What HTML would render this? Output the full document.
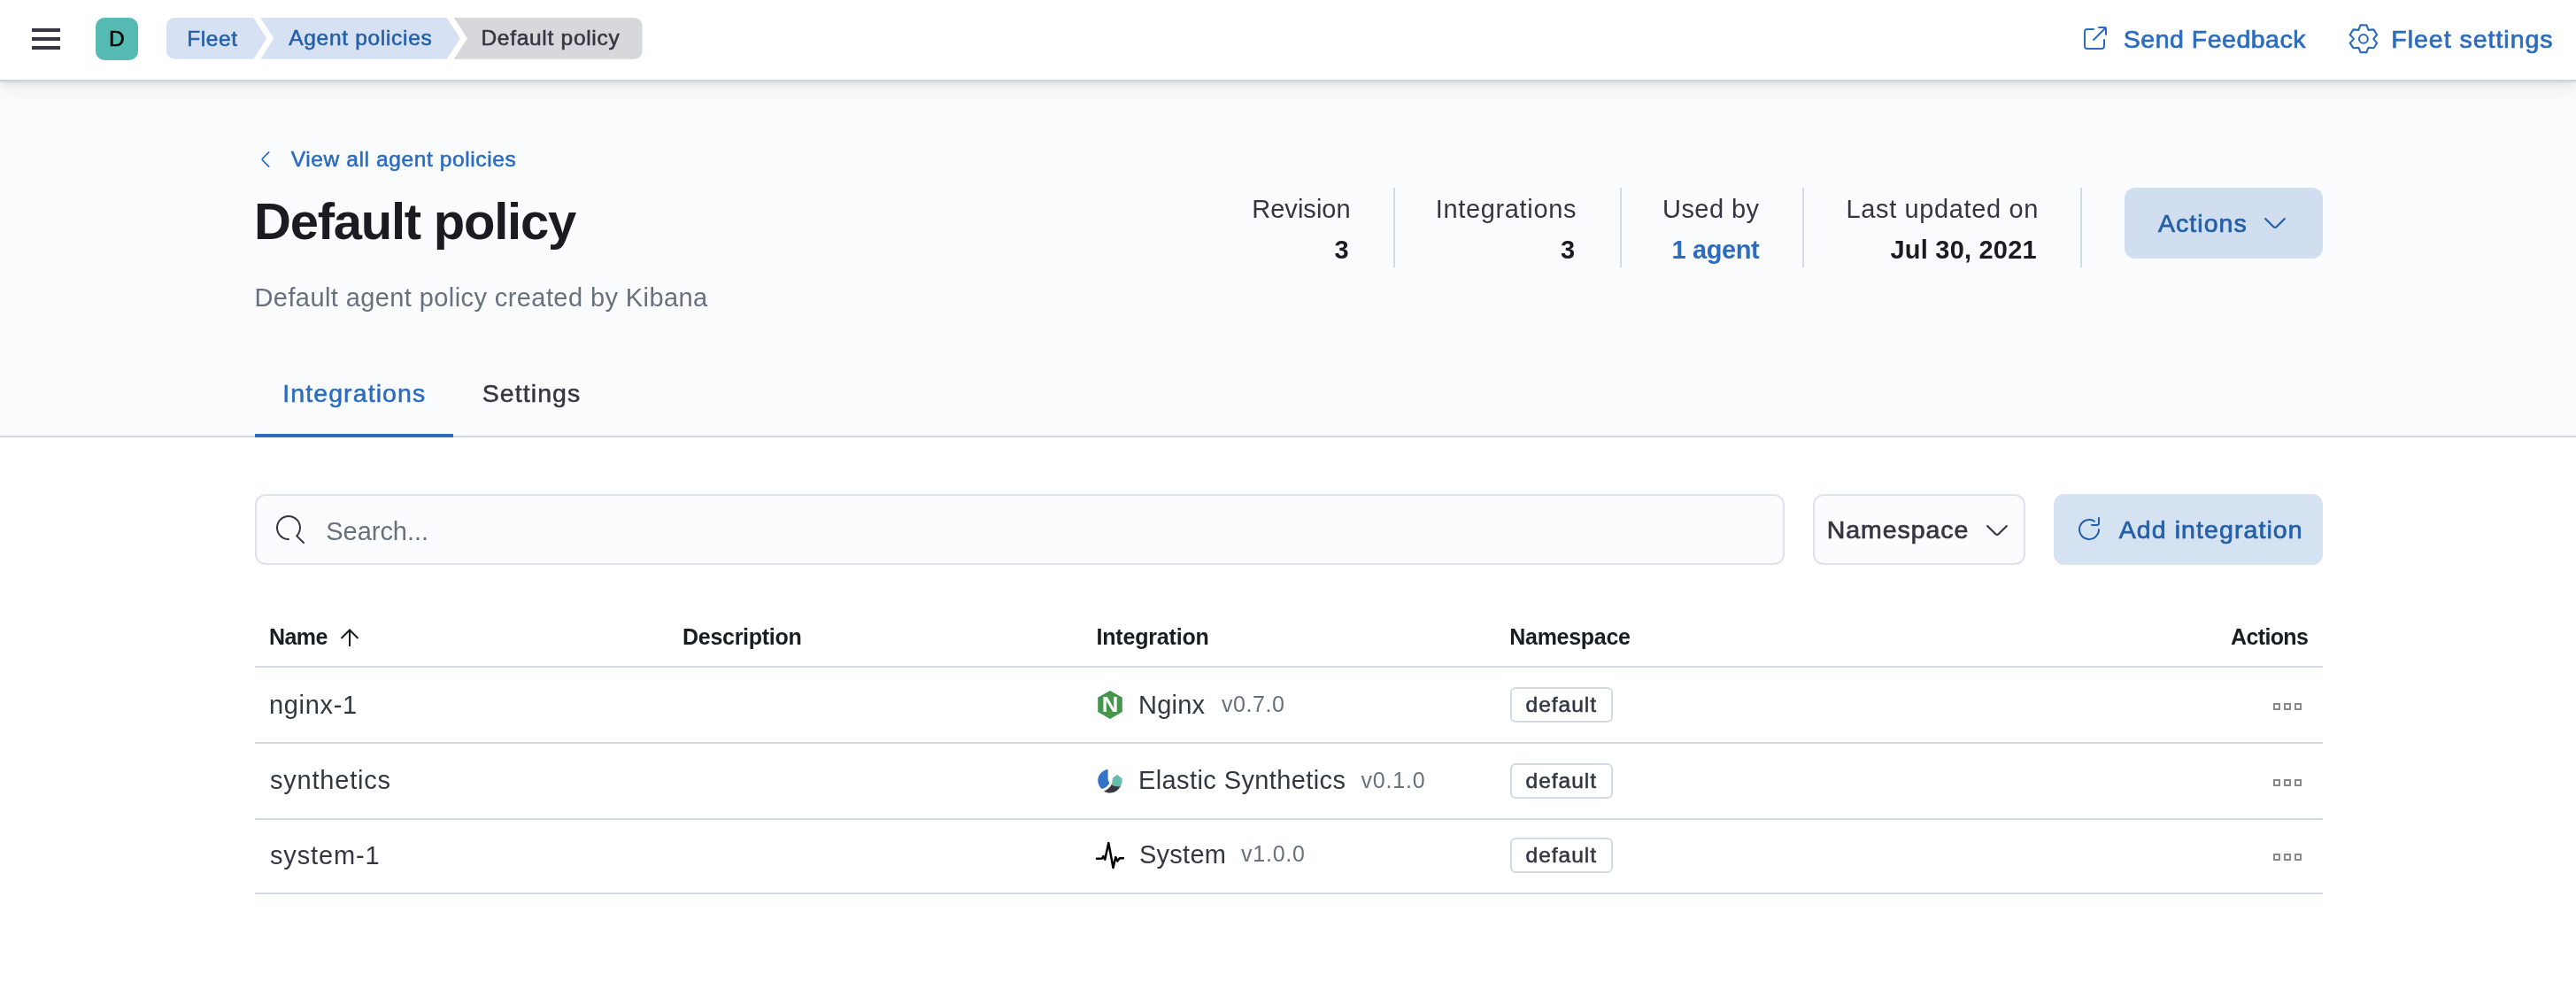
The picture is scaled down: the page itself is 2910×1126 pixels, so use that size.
<!DOCTYPE html>
<html lang="en"><head><meta charset="utf-8"><title>Default policy - Fleet</title>
<style>
*{box-sizing:border-box;margin:0;padding:0}
html,body{width:2910px;height:1126px;overflow:hidden;background:#fff}
body{font-family:"Liberation Sans",Arial,sans-serif;position:relative;-webkit-font-smoothing:antialiased;will-change:transform}
.t{position:absolute;white-space:nowrap;display:block}
.ic{position:absolute;display:block;overflow:visible}
#pagehead{position:absolute;left:0;top:0;width:2910px;height:494px;background:#fafbfd;border-bottom:2px solid #d3dae6}
#topbar{position:absolute;left:0;top:0;width:2910px;height:92px;background:#fff;border-bottom:2px solid #ccd3e1;box-shadow:0 1.4px 2.8px rgba(0,0,0,.09),0 3.8px 8px rgba(0,0,0,.06),0 9px 20px rgba(0,0,0,.05)}
.bar{position:absolute;left:36px;width:32px;height:4px;background:#343741}
#avatar{position:absolute;left:108px;top:20px;width:48px;height:48px;border-radius:10px;background:#55bab2}
.vline{position:absolute;top:212px;width:2px;height:90px;background:#d3dae6}
.btn{position:absolute;border-radius:12px;background:rgba(43,108,192,.2)}
.field{position:absolute;top:558px;height:80px;border:2px solid #dfe3ef;border-radius:12px;background:#fbfcfd}
#tabline{position:absolute;left:288px;top:490px;width:224px;height:4px;background:#2b6cc0}
.hr{position:absolute;left:288px;width:2336px;height:2px;background:#d3dae6}
.badge{position:absolute;left:1706px;width:116px;height:40px;border:2px solid #d3dae6;border-radius:6px;background:#fff}
.sq{position:absolute;width:8px;height:8px;border:2px solid #8a8a8a}
</style></head><body>
<div id="pagehead"></div>
<header id="topbar">
 <button aria-label="Toggle primary navigation" style="border:0;background:none"><i class="bar" style="top:32px"></i><i class="bar" style="top:42px"></i><i class="bar" style="top:52px"></i></button>
 <div id="avatar"></div><span class="t" style="left:122.90px;top:31.65px;font-size:24.5px;line-height:24.5px;font-weight:400;color:#000;letter-spacing:0.000px;-webkit-text-stroke:0.55px #000;">D</span>
 <nav aria-label="breadcrumb">
  <svg class="ic" style="left:188px;top:20px" width="540" height="47" viewBox="0 0 540 47">
   <path d="M9 0 H98.4 L113.3 23.35 L98.4 46.7 H9 A9 9 0 0 1 0 37.7 V9 A9 9 0 0 1 9 0Z" fill="#d6e2f4"/>
   <path d="M106.3 0 H316.7 L331.9 23.35 L316.7 46.7 H106.3 L121.2 23.35Z" fill="#d6e2f4"/>
   <path d="M324.8 0 H528.5 A9 9 0 0 1 537.5 9 V37.7 A9 9 0 0 1 528.5 46.7 H324.8 L339.9 23.35Z" fill="#d7d8db"/>
  </svg>
  <a class="t" style="left:211.20px;top:31.55px;font-size:24.5px;line-height:24.5px;font-weight:400;color:#2460a8;letter-spacing:0.585px;-webkit-text-stroke:0.55px #2460a8;">Fleet</a><a class="t" style="left:326.25px;top:31.45px;font-size:24.5px;line-height:24.5px;font-weight:400;color:#2460a8;letter-spacing:0.689px;-webkit-text-stroke:0.55px #2460a8;">Agent policies</a><span class="t" style="left:543.40px;top:31.35px;font-size:24.5px;line-height:24.5px;font-weight:400;color:#343741;letter-spacing:0.714px;-webkit-text-stroke:0.55px #343741;">Default policy</span>
 </nav>
 <svg class="ic " style="left:2350px;top:28px" width="32" height="32" viewBox="0 0 16 16"><path fill="#2b6cc0" d="M13 8.5a.5.5 0 1 1 1 0V12a2 2 0 0 1-2 2H4a2 2 0 0 1-2-2V4a2 2 0 0 1 2-2h3.5a.5.5 0 0 1 0 1H4a1 1 0 0 0-1 1v8a1 1 0 0 0 1 1h8a1 1 0 0 0 1-1V8.5Zm-5.12.339a.5.5 0 1 1-.706-.707L13.305 2H10.5a.5.5 0 1 1 0-1H14a1 1 0 0 1 1 1v3.5a.5.5 0 1 1-1 0V2.72L7.88 8.839Z"/></svg><a class="t" style="left:2398.80px;top:29.65px;font-size:28.5px;line-height:28.5px;font-weight:400;color:#2b6cc0;letter-spacing:0.501px;-webkit-text-stroke:0.7px #2b6cc0;">Send Feedback</a>
 <svg class="ic" style="left:2640px;top:14px" width="60" height="60" viewBox="0 0 60 60"><path d="M26.5 14.4 L33.4 14.4 L35.5 19.9 L41.5 19.4 L45.1 25.3 L41.2 29.9 L45.1 34.6 L41.5 40.2 L35.5 39.7 L33.4 45.1 L26.5 45.1 L24.4 39.7 L18.4 40.2 L14.7 34.6 L19.0 29.9 L14.7 25.3 L18.4 19.4 L24.4 19.9Z" fill="none" stroke="#2b6cc0" stroke-width="2.1" stroke-linejoin="round"/><circle cx="29.9" cy="29.9" r="4.9" fill="none" stroke="#2b6cc0" stroke-width="2.1"/></svg><a class="t" style="left:2701.30px;top:29.65px;font-size:28.5px;line-height:28.5px;font-weight:400;color:#2b6cc0;letter-spacing:0.981px;-webkit-text-stroke:0.7px #2b6cc0;">Fleet settings</a>
</header>
<main>
 <section>
  <svg class="ic " style="left:288px;top:168px" width="24" height="24" viewBox="0 0 16 16"><path fill="#2b6cc0" transform="rotate(90 8 8)" d="M13.069 5.157L8.384 9.768a.546.546 0 0 1-.768 0L2.93 5.158a.552.552 0 0 0-.771 0 .53.53 0 0 0 0 .759l4.684 4.61c.641.631 1.672.63 2.312 0l4.684-4.61a.53.53 0 0 0 0-.76.552.552 0 0 0-.771 0z"/></svg><a class="t" style="left:328.75px;top:167.65px;font-size:24.5px;line-height:24.5px;font-weight:400;color:#2b6cc0;letter-spacing:0.609px;-webkit-text-stroke:0.55px #2b6cc0;">View all agent policies</a>
  <h1 class="t" style="left:287.00px;top:221.40px;font-size:58px;line-height:58px;font-weight:700;color:#1a1c21;letter-spacing:-1.233px;">Default policy</h1>
  <p class="t" style="left:287.50px;top:322.25px;font-size:29px;line-height:29px;font-weight:400;color:#69707d;letter-spacing:0.408px;">Default agent policy created by Kibana</p>
  <dl>
   <dt class="t" style="left:1414.25px;top:222.00px;font-size:29px;line-height:29px;font-weight:400;color:#343741;letter-spacing:0.024px;">Revision</dt><dd class="t" style="left:1507.50px;top:268.00px;font-size:29px;line-height:29px;font-weight:700;color:#1a1c21;letter-spacing:0.000px;">3</dd><i class="vline" style="left:1574px"></i>
   <dt class="t" style="left:1621.75px;top:222.00px;font-size:29px;line-height:29px;font-weight:400;color:#343741;letter-spacing:0.655px;">Integrations</dt><dd class="t" style="left:1763.00px;top:268.00px;font-size:29px;line-height:29px;font-weight:700;color:#1a1c21;letter-spacing:0.000px;">3</dd><i class="vline" style="left:1830px"></i>
   <dt class="t" style="left:1878.00px;top:222.00px;font-size:29px;line-height:29px;font-weight:400;color:#343741;letter-spacing:0.436px;">Used by</dt><dd class="t" style="left:1888.50px;top:268.00px;font-size:29px;line-height:29px;font-weight:700;color:#2b6cc0;letter-spacing:-0.395px;">1 agent</dd><i class="vline" style="left:2036px"></i>
   <dt class="t" style="left:2085.50px;top:222.00px;font-size:29px;line-height:29px;font-weight:400;color:#343741;letter-spacing:0.633px;">Last updated on</dt><dd class="t" style="left:2135.50px;top:268.00px;font-size:29px;line-height:29px;font-weight:700;color:#1a1c21;letter-spacing:0.208px;">Jul 30, 2021</dd><i class="vline" style="left:2350px"></i>
  </dl>
  <div class="btn" style="left:2400px;top:212px;width:224px;height:80px"></div><span class="t" style="left:2438.00px;top:237.65px;font-size:28.5px;line-height:28.5px;font-weight:400;color:#2460a8;letter-spacing:1.048px;-webkit-text-stroke:0.7px #2460a8;">Actions</span><svg class="ic " style="left:2554px;top:236px" width="32" height="32" viewBox="0 0 16 16"><path fill="#2460a8" d="M13.069 5.157L8.384 9.768a.546.546 0 0 1-.768 0L2.93 5.158a.552.552 0 0 0-.771 0 .53.53 0 0 0 0 .759l4.684 4.61c.641.631 1.672.63 2.312 0l4.684-4.61a.53.53 0 0 0 0-.76.552.552 0 0 0-.771 0z"/></svg>
  <div role="tablist"><a class="t" style="left:319.25px;top:429.65px;font-size:28.5px;line-height:28.5px;font-weight:400;color:#2b6cc0;letter-spacing:1.097px;-webkit-text-stroke:0.5px #2b6cc0;">Integrations</a><a class="t" style="left:544.75px;top:429.65px;font-size:28.5px;line-height:28.5px;font-weight:400;color:#343741;letter-spacing:1.074px;-webkit-text-stroke:0.5px #343741;">Settings</a><i id="tabline"></i></div>
 </section>
 <section>
  <div class="field" style="left:288px;width:1728px"></div><svg class="ic " style="left:312px;top:582px" width="32" height="32" viewBox="0 0 16 16"><path fill="#343741" d="M11.271 11.978l3.872 3.873a.502.502 0 0 0 .708 0 .502.502 0 0 0 0-.708l-3.565-3.564c2.38-2.747 2.267-6.923-.342-9.532-2.73-2.73-7.17-2.73-9.898 0-2.728 2.729-2.728 7.17 0 9.9a6.955 6.955 0 0 0 4.949 2.05.5.5 0 0 0 0-1 5.96 5.96 0 0 1-4.242-1.757 6.01 6.01 0 0 1 0-8.486c2.337-2.34 6.143-2.34 8.484 0a6.01 6.01 0 0 1 0 8.486.5.5 0 0 0 .034.738z"/></svg><span class="t" style="left:368.25px;top:586.00px;font-size:29px;line-height:29px;font-weight:400;color:#69707d;letter-spacing:-0.031px;">Search...</span>
  <div class="field" style="left:2048px;width:240px"></div><span class="t" style="left:2063.75px;top:583.65px;font-size:28.5px;line-height:28.5px;font-weight:400;color:#343741;letter-spacing:0.941px;-webkit-text-stroke:0.7px #343741;">Namespace</span><svg class="ic " style="left:2240px;top:582.5px" width="32" height="32" viewBox="0 0 16 16"><path fill="#343741" d="M13.069 5.157L8.384 9.768a.546.546 0 0 1-.768 0L2.93 5.158a.552.552 0 0 0-.771 0 .53.53 0 0 0 0 .759l4.684 4.61c.641.631 1.672.63 2.312 0l4.684-4.61a.53.53 0 0 0 0-.76.552.552 0 0 0-.771 0z"/></svg>
  <div class="btn" style="left:2320px;top:558px;width:304px;height:80px"></div><svg class="ic " style="left:2344px;top:582px" width="32" height="32" viewBox="0 0 16 16"><path fill="#2460a8" d="M11.228 2.942a.5.5 0 1 1-.538.842A5 5 0 1 0 13 8a.5.5 0 1 1 1 0 6 6 0 1 1-2.772-5.058ZM14 1.5v3A1.5 1.5 0 0 1 12.5 6h-3a.5.5 0 0 1 0-1h3a.5.5 0 0 0 .5-.5v-3a.5.5 0 1 1 1 0Z"/></svg><span class="t" style="left:2393.75px;top:583.65px;font-size:28.5px;line-height:28.5px;font-weight:400;color:#2460a8;letter-spacing:1.081px;-webkit-text-stroke:0.7px #2460a8;">Add integration</span>
  <div role="table">
   <span class="t" style="left:304.00px;top:707.00px;font-size:25px;line-height:25px;font-weight:700;color:#1a1c21;letter-spacing:-0.562px;">Name</span><svg class="ic" style="left:383px;top:708px" width="24" height="24" viewBox="0 0 24 24"><path d="M12 3.5 V22 M2.5 13 L12 3.5 L21.5 13" fill="none" stroke="#1a1c21" stroke-width="2"/></svg>
   <span class="t" style="left:771.00px;top:707.00px;font-size:25px;line-height:25px;font-weight:700;color:#1a1c21;letter-spacing:-0.275px;">Description</span><span class="t" style="left:1238.50px;top:707.00px;font-size:25px;line-height:25px;font-weight:700;color:#1a1c21;letter-spacing:-0.189px;">Integration</span><span class="t" style="left:1705.25px;top:707.00px;font-size:25px;line-height:25px;font-weight:700;color:#1a1c21;letter-spacing:-0.290px;">Namespace</span><span class="t" style="left:2520.00px;top:707.00px;font-size:25px;line-height:25px;font-weight:700;color:#1a1c21;letter-spacing:-0.628px;">Actions</span>
   <i class="hr" style="top:752px"></i>
   <span class="t" style="left:304.00px;top:781.75px;font-size:29px;line-height:29px;font-weight:400;color:#343741;letter-spacing:0.669px;">nginx-1</span><svg class="ic" style="left:1230px;top:770px" width="50" height="50" viewBox="0 0 50 50"><path d="M24 10 L37.8 17.7 L37.8 33.9 L24 41.9 L10.2 33.9 L10.2 17.7Z" fill="#43964a"/><text transform="translate(24 33.6) scale(1.09 1)" text-anchor="middle" font-family="Liberation Sans, sans-serif" font-weight="700" font-size="23.6" fill="#fff">N</text></svg><span class="t" style="left:1286.00px;top:781.50px;font-size:29px;line-height:29px;font-weight:400;color:#343741;letter-spacing:0.214px;">Nginx</span><span class="t" style="left:1380.00px;top:782.75px;font-size:25px;line-height:25px;font-weight:400;color:#69707d;letter-spacing:0.560px;">v0.7.0</span><span class="badge" style="top:776px"></span><span class="t" style="left:1723.50px;top:783.85px;font-size:24.5px;line-height:24.5px;font-weight:400;color:#343741;letter-spacing:1.000px;-webkit-text-stroke:0.55px #343741;">default</span><i class="sq" style="left:2568px;top:794px"></i><i class="sq" style="left:2580px;top:794px"></i><i class="sq" style="left:2592px;top:794px"></i>
   <i class="hr" style="top:838px"></i>
   <span class="t" style="left:305.00px;top:867.25px;font-size:29px;line-height:29px;font-weight:400;color:#343741;letter-spacing:0.784px;">synthetics</span><svg class="ic" style="left:1230px;top:856px" width="50" height="50" viewBox="0 0 50 50"><path d="M21.6 12.8 C14 14.5 9.6 20.5 10.3 26.5 C10.7 30 12.3 33 14.5 35.1 C18.5 34.3 22 31.5 23.3 28.3 C22.3 26.5 21.6 24.8 21.6 22.6Z" fill="#3374c6"/><path d="M32.1 18.8 L37.6 23.3 C37.9 26.5 37.3 29.5 35.9 32.1 C32.2 32.8 28.5 32 25.6 30.1 C26.5 28 26.8 25.6 26.6 23.1Z" fill="#65bdaf"/><path d="M25.6 30.1 C28.5 32 32.2 32.8 35.9 32.1 C33.5 36.6 29 39.6 24.1 39.6 C21.5 39.6 19.1 38.8 17.1 37.4 C20.8 36.2 23.8 33.6 25.6 30.1Z" fill="#353942"/></svg><span class="t" style="left:1286.00px;top:867.25px;font-size:29px;line-height:29px;font-weight:400;color:#343741;letter-spacing:0.397px;">Elastic Synthetics</span><span class="t" style="left:1537.50px;top:868.50px;font-size:25px;line-height:25px;font-weight:400;color:#69707d;letter-spacing:0.810px;">v0.1.0</span><span class="badge" style="top:862px"></span><span class="t" style="left:1723.50px;top:869.65px;font-size:24.5px;line-height:24.5px;font-weight:400;color:#343741;letter-spacing:1.000px;-webkit-text-stroke:0.55px #343741;">default</span><i class="sq" style="left:2568px;top:880px"></i><i class="sq" style="left:2580px;top:880px"></i><i class="sq" style="left:2592px;top:880px"></i>
   <i class="hr" style="top:924px"></i>
   <span class="t" style="left:305.00px;top:951.50px;font-size:29px;line-height:29px;font-weight:400;color:#343741;letter-spacing:0.857px;">system-1</span><svg class="ic" style="left:1230px;top:940px" width="50" height="50" viewBox="0 0 50 50"><path d="M9 29.8 L15 29.6 L16.3 27.1 L18.3 30.6 L22.3 12 L27.5 39.9 L30.3 28.1 L32.3 32.6 L34.9 29.3 L38.9 29.3" fill="none" stroke="#000" stroke-width="2.5" stroke-linecap="round" stroke-linejoin="round"/></svg><span class="t" style="left:1287.00px;top:951.00px;font-size:29px;line-height:29px;font-weight:400;color:#343741;letter-spacing:0.244px;">System</span><span class="t" style="left:1402.00px;top:952.25px;font-size:25px;line-height:25px;font-weight:400;color:#69707d;letter-spacing:0.760px;">v1.0.0</span><span class="badge" style="top:946px"></span><span class="t" style="left:1723.50px;top:953.65px;font-size:24.5px;line-height:24.5px;font-weight:400;color:#343741;letter-spacing:1.000px;-webkit-text-stroke:0.55px #343741;">default</span><i class="sq" style="left:2568px;top:964px"></i><i class="sq" style="left:2580px;top:964px"></i><i class="sq" style="left:2592px;top:964px"></i>
   <i class="hr" style="top:1008px"></i>
  </div>
 </section>
</main>
</body></html>
